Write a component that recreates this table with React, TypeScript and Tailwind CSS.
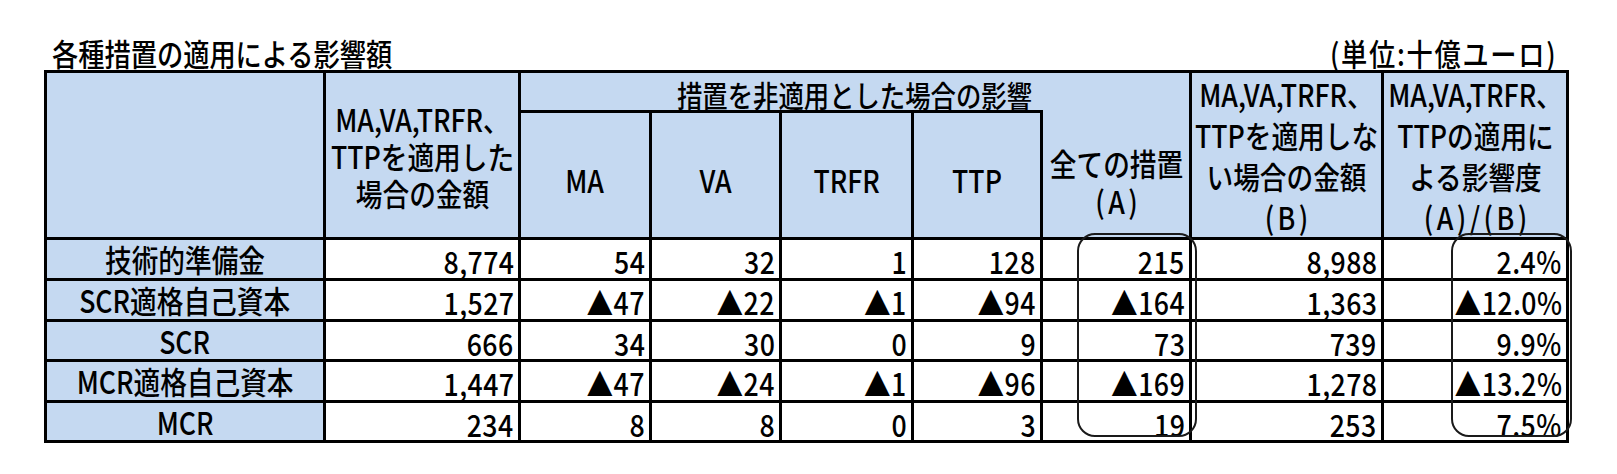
import React from 'react'

const rows = [
  { label: '技術的準備金', v: ['8,774', '54', '32', '1', '128', '215', '8,988', '2.4%'] },
  { label: 'SCR適格自己資本', v: ['1,527', '▲47', '▲22', '▲1', '▲94', '▲164', '1,363', '▲12.0%'] },
  { label: 'SCR', v: ['666', '34', '30', '0', '9', '73', '739', '9.9%'] },
  { label: 'MCR適格自己資本', v: ['1,447', '▲47', '▲24', '▲1', '▲96', '▲169', '1,278', '▲13.2%'] },
  { label: 'MCR', v: ['234', '8', '8', '0', '3', '19', '253', '7.5%'] },
]

const rowHeights = ['h-[41px]', 'h-[41px]', 'h-[40px]', 'h-[41px]', 'h-[40px]']

const th = 'border-[3px] border-black bg-[#c5d9f1] font-medium text-center align-middle p-0 whitespace-nowrap'
const td = 'border-[3px] border-black text-right align-middle pr-[4px] pt-[4px] pb-0 leading-[30px] whitespace-nowrap'

// the sheet's font is a tall, slightly condensed gothic: squeeze the glyphs horizontally
function Narrow({
  children,
  origin = 'origin-center',
  className = '',
}: {
  children: React.ReactNode
  origin?: string
  className?: string
}) {
  return <span className={`inline-block scale-x-[0.86] ${origin} ${className}`}>{children}</span>
}

function HeadText({ children, className = '' }: { children: React.ReactNode; className?: string }) {
  return (
    <div className="flex justify-center">
      <Narrow className={className}>{children}</Narrow>
    </div>
  )
}

export default function App() {
  return (
    <div className="w-[1617px] h-[474px] bg-white text-black font-medium pl-[44px] pt-[36px] font-['Noto_Sans_CJK_JP',sans-serif]">
      {/* caption row */}
      <div className="w-[1525px] h-[34px] flex items-end justify-between whitespace-nowrap">
        <div className="pl-[8px] text-[30.5px] leading-[34px]">
          <span className="inline-block scale-x-[0.86] origin-left">各種措置の適用による影響額</span>
        </div>
        <div className="pr-[12px] text-[30.5px] leading-[34px]">
          <span className="inline-block scale-x-[0.86] origin-right tracking-[2px]">(単位:十億ユーロ)</span>
        </div>
      </div>

      <div className="relative w-[1525px]">
        <table className="table-fixed w-[1525px] text-[31px] border-[3px] border-black">
          <colgroup>
            <col className="w-[279px]" />
            <col className="w-[195px]" />
            <col className="w-[131px]" />
            <col className="w-[130px]" />
            <col className="w-[132px]" />
            <col className="w-[129px]" />
            <col className="w-[149px]" />
            <col className="w-[192px]" />
            <col className="w-[185px]" />
          </colgroup>
          <thead>
            <tr className="h-[40px]">
              <th rowSpan={2} className={th} />
              <th rowSpan={2} className={`${th} leading-[37px]`}>
                <HeadText>
                  MA,VA,TRFR、
                  <br />
                  TTPを適用した
                  <br />
                  場合の金額
                </HeadText>
              </th>
              <th colSpan={5} className={`${th} border-b-0 pt-[4px] text-[29.5px] leading-[30px]`}>
                <HeadText>措置を非適用とした場合の影響</HeadText>
              </th>
              <th rowSpan={2} className={`${th} leading-[41px]`}>
                <HeadText>
                  MA,VA,TRFR、
                  <br />
                  TTPを適用しな
                  <br />
                  い場合の金額
                  <br />
                  <span className="tracking-[4px] pl-[4px]">(B)</span>
                </HeadText>
              </th>
              <th rowSpan={2} className={`${th} leading-[41px]`}>
                <HeadText>
                  MA,VA,TRFR、
                  <br />
                  TTPの適用に
                  <br />
                  よる影響度
                  <br />
                  <span className="tracking-[4px] pl-[4px]">(A)/(B)</span>
                </HeadText>
              </th>
            </tr>
            <tr className="h-[126px]">
              <th className={`${th} pt-[10px]`}>
                <HeadText>MA</HeadText>
              </th>
              <th className={`${th} pt-[10px]`}>
                <HeadText>VA</HeadText>
              </th>
              <th className={`${th} pt-[10px]`}>
                <HeadText>TRFR</HeadText>
              </th>
              <th className={`${th} pt-[10px]`}>
                <HeadText>TTP</HeadText>
              </th>
              <th className={`${th} border-t-0 pt-[16px] leading-[38px]`}>
                <HeadText>
                  全ての措置
                  <br />
                  <span className="tracking-[4px] pl-[4px]">(A)</span>
                </HeadText>
              </th>
            </tr>
          </thead>
          <tbody>
            {rows.map((r, i) => (
              <tr key={r.label} className={rowHeights[i]}>
                <td className="border-[3px] border-black bg-[#c5d9f1] text-center align-middle p-0 leading-[30px] whitespace-nowrap">
                  <Narrow>{r.label}</Narrow>
                </td>
                {r.v.map((v, j) => (
                  <td key={j} className={td}>
                    <Narrow origin="origin-right" className="tracking-[0.5px]">
                      {v}
                    </Narrow>
                  </td>
                ))}
              </tr>
            ))}
          </tbody>
        </table>

        {/* hand-drawn highlight frames */}
        <div className="absolute left-[1033px] top-[163px] w-[120px] h-[204px] rounded-[18px] border-2 border-[#1a1a1a]" />
        <div className="absolute left-[1407px] top-[163px] w-[121px] h-[204px] rounded-[18px] border-2 border-[#1a1a1a]" />
      </div>
    </div>
  )
}
